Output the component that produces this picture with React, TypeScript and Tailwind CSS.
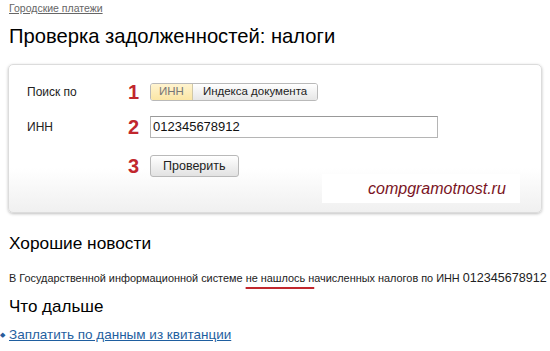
import React from 'react';

const font = { fontFamily: '"Liberation Sans", Arial, sans-serif' };

function Step({ n }: { n: string }) {
  return (
    <span className="w-[22px] text-[20px] font-bold leading-none text-[#c1272d]">{n}</span>
  );
}

export default function App() {
  return (
    <div className="w-[550px] h-[351px] overflow-hidden bg-white text-black relative" style={font}>
      {/* Шапка */}
      <div className="pl-[9px] pt-[2px]">
        <a className="text-[10.5px] text-[#666] underline leading-[12px] block">Городские платежи</a>
        <h1 className="mt-[10px] text-[20.2px] leading-[24px] text-black">Проверка задолженностей: налоги</h1>
      </div>

      {/* Форма */}
      <div className="mx-[8px] mt-[16px] h-[149px] rounded-[5px] border border-[#dcdcdc] bg-gradient-to-b from-white from-70% to-[#f0f0f0] shadow-[0_1px_3px_rgba(0,0,0,0.25)] relative">
        <div className="pl-[18px] pt-[17px]">
          <div className="flex items-center h-[20px]">
            <span className="w-[101px] text-[12px] text-[#222]">Поиск по</span>
            <Step n="1" />
            <div className="flex h-[18px] rounded-[3px] border border-[#b9b9b9] overflow-hidden text-[11.5px]">
              <span className="px-[8px] flex items-center bg-gradient-to-b from-[#fff4d0] to-[#fbe6a4] text-[#777] border-r border-[#d0c8a8]">ИНН</span>
              <span className="px-[10px] flex items-center bg-gradient-to-b from-white to-[#e6e6e6] text-[#222]">Индекса документа</span>
            </div>
          </div>
          <div className="flex items-center h-[22px] mt-[14px]">
            <span className="w-[101px] text-[12px] text-[#222]">ИНН</span>
            <Step n="2" />
            <div className="w-[288px] h-[22px] border border-[#b5b5b5] border-t-[#999] bg-white flex items-center pl-[2px] text-[13px] text-[#111]">
              012345678912
            </div>
          </div>
          <div className="flex items-center h-[22px] mt-[17px]">
            <span className="w-[101px]" />
            <Step n="3" />
            <div className="h-[22px] px-[12px] rounded-[3px] border border-[#b9b9b9] bg-gradient-to-b from-white to-[#e2e2e2] flex items-center text-[12.5px] text-[#222]">
              Проверить
            </div>
          </div>
        </div>
        <div className="absolute left-[313px] top-[109px] w-[198px] h-[29px] bg-white flex items-center pl-[46px]">
          <span className="text-[16px] italic text-[#7a1424]">compgramotnost.ru</span>
        </div>
      </div>

      {/* Результат */}
      <div className="pl-[9px]">
        <h2 className="mt-[20px] text-[17.3px] leading-[20px]">Хорошие новости</h2>
        <p className="mt-[17px] text-[10.9px] leading-[16px] text-[#222] whitespace-nowrap">
          В Государственной информационной системе{' '}
          <span className="underline decoration-[#c1272d] decoration-2 underline-offset-[5px]">не нашлось н</span>ачисленных налогов по ИНН{' '}
          <span className="text-[12.6px]">012345678912</span>
        </p>
        <h2 className="mt-[11px] text-[17px] leading-[20px]">Что дальше</h2>
      </div>
      <div className="flex items-center mt-[8px]">
        <span className="text-[#2a5c9a] text-[7px] mr-[4px]">◆</span>
        <a className="text-[13.5px] text-[#1f5fa0] underline">Заплатить по данным из квитанции</a>
      </div>
    </div>
  );
}
